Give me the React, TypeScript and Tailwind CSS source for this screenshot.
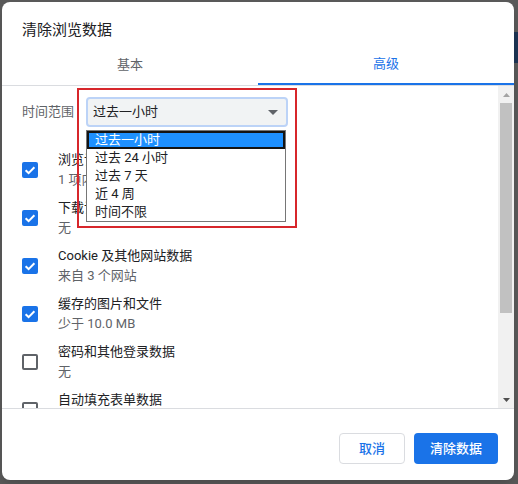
import React from "react";

const FONT = 'Roboto, "Noto Sans CJK SC", "Noto Sans", sans-serif';

function Check({ checked }: { checked: boolean }) {
  if (checked) {
    return (
      <div className="w-[16px] h-[16px] rounded-[2px] bg-[#1a73e8] flex items-center justify-center shrink-0">
        <svg width="16" height="16" viewBox="0 0 16 16">
          <path d="M3.6 8.3 L6.6 11.1 L12.4 5.2" fill="none" stroke="#fff" strokeWidth="2" />
        </svg>
      </div>
    );
  }
  return <div className="w-[16px] h-[16px] rounded-[2px] border-2 border-[#5f6368] shrink-0" />;
}

function Row({ checked, title, sub }: { checked: boolean; title: string; sub: string }) {
  return (
    <div className="h-[48px] flex items-center pl-5 shrink-0">
      <Check checked={checked} />
      <div className="ml-[20px] flex flex-col">
        <div className="h-[20px] leading-[20px] text-[13px] text-[#202124] whitespace-nowrap">{title}</div>
        <div className="h-[20px] leading-[20px] text-[13px] text-[#5f6368] whitespace-nowrap">{sub}</div>
      </div>
    </div>
  );
}

export default function App() {
  const options = ["过去一小时", "过去 24 小时", "过去 7 天", "近 4 周", "时间不限"];
  return (
    <div className="relative w-[518px] h-[484px] bg-[#595959] pl-[2px] pt-[2px] overflow-hidden" style={{ fontFamily: FONT }}>
      <div className="absolute left-[514px] top-[32px] w-[4px] h-[31px] bg-[#1d3554]" />
      <div className="relative w-[512px] h-[478px] bg-white rounded-[8px] flex flex-col overflow-hidden shadow-lg">
        <div className="h-[42px] pt-[18px] pl-5 shrink-0">
          <div className="text-[15px] leading-[20px] text-[#202124]">清除浏览数据</div>
        </div>
        <div className="h-[42px] flex border-b border-[#dadce0] shrink-0">
          <div className="flex-1 flex items-center justify-center text-[13px] text-[#5f6368]">基本</div>
          <div className="flex-1 flex items-center justify-center text-[13px] text-[#1a73e8] border-b-2 border-[#1a73e8]">高级</div>
        </div>
        <div className="h-[323px] flex border-b border-[#dadce0] shrink-0">
          <div className="flex-1 flex flex-col overflow-hidden">
            <div className="h-[60px] pt-[11px] pl-5 flex items-start shrink-0">
              <div className="h-[30px] w-[64px] flex items-center text-[13px] text-[#5f6368]">时间范围</div>
              <div className="h-[30px] w-[202px] rounded-[4px] bg-[#f1f3f4] border-2 border-[#bcd3f7] flex items-center justify-between pl-[5px] pr-[8px]">
                <span className="text-[13px] text-[#202124]">过去一小时</span>
                <svg width="10" height="5" viewBox="0 0 10 5">
                  <polygon points="0,0 10,0 5,5" fill="#5f6368" />
                </svg>
              </div>
            </div>
            <Row checked title="浏览记录" sub="1 项内容" />
            <Row checked title="下载记录" sub="无" />
            <Row checked title="Cookie 及其他网站数据" sub="来自 3 个网站" />
            <Row checked title="缓存的图片和文件" sub="少于 10.0 MB" />
            <Row checked={false} title="密码和其他登录数据" sub="无" />
            <Row checked={false} title="自动填充表单数据" sub="无" />
          </div>
          <div className="w-[16px] bg-[#f1f1f1] flex flex-col shrink-0">
            <div className="h-[17px] flex items-center justify-center">
              <svg width="7" height="4" viewBox="0 0 7 4">
                <polygon points="0,4 7,4 3.5,0" fill="#a3a3a3" />
              </svg>
            </div>
            <div className="h-[210px] mx-[2px] bg-[#c1c1c1]" />
            <div className="flex-1" />
            <div className="h-[17px] flex items-center justify-center">
              <svg width="7" height="4" viewBox="0 0 7 4">
                <polygon points="0,0 7,0 3.5,4" fill="#505050" />
              </svg>
            </div>
          </div>
        </div>
        <div className="flex-1 flex justify-end items-start pt-[24px] pr-4 gap-[9px]">
          <div className="h-[31px] w-[66px] rounded-[4px] border border-[#dadce0] flex items-center justify-center text-[13px] font-medium text-[#1a73e8]">取消</div>
          <div className="h-[31px] w-[84px] rounded-[4px] bg-[#1a73e8] flex items-center justify-center text-[13px] font-medium text-white">清除数据</div>
        </div>
      </div>
      <div className="absolute left-[86px] top-[130px] w-[200px] h-[92px] bg-white border border-[#767676] flex flex-col">
        {options.map((o, i) => (
          <div
            key={o}
            className={
              i === 0
                ? "h-[18px] flex items-center pl-[6px] text-[13px] text-white bg-[#1e90ff] border-2 border-[#141414]"
                : "h-[18px] flex items-center pl-[8px] text-[13px] text-[#202124]"
            }
          >
            {o}
          </div>
        ))}
      </div>
      <div className="absolute left-[77px] top-[88px] w-[220px] h-[140px] border-2 border-[#d7262b]" />
    </div>
  );
}
